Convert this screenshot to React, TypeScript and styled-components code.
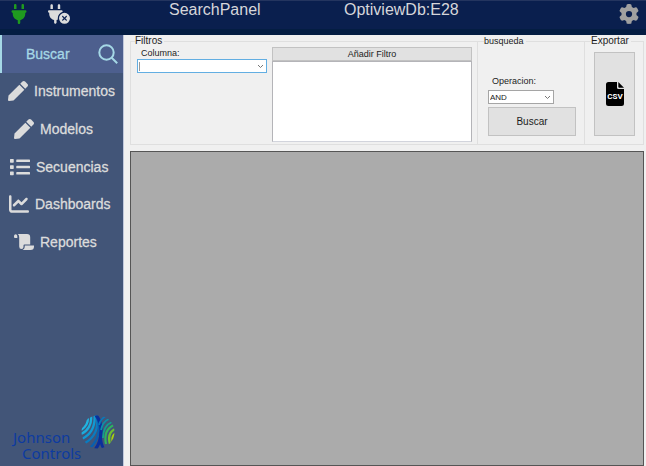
import React from "react";
import styled, { createGlobalStyle } from "styled-components";
import { FaPen, FaList } from "react-icons/fa";
import { FaPlug, FaPlugCircleXmark, FaChartLine, FaGear } from "react-icons/fa6";

const GlobalStyle = createGlobalStyle`
  * { box-sizing: border-box; }
  body { margin: 0; background: #f0f0f0; font-family: "Liberation Sans", Arial, sans-serif; }
  button, select { font-family: inherit; }
`;

const Page = styled.div`
  min-height: 100vh;
  display: grid;
  grid-template-rows: 35px 1fr;
`;

const Header = styled.header`
  display: grid;
  grid-template-columns: 38px 131px 175px 1fr auto;
  align-items: center;
  padding: 0 7px 2px 0;
  background: #0a1f4e;
  border-top: 1px solid #24355f;
  border-bottom: 6px solid #041d42;
  color: #d6d6da;
`;

const IconButton = styled.button<{ $color: string; $left: number }>`
  display: flex;
  padding: 0 0 0 ${(p) => p.$left}px;
  border: 0;
  background: none;
  color: ${(p) => p.$color};
`;

const Title = styled.span`
  font-size: 16px;
  line-height: 18px;
  padding-bottom: 8px;
`;

const Body = styled.div`
  display: grid;
  grid-template-columns: 124px 1fr;
`;

const Sidebar = styled.aside`
  display: flex;
  flex-direction: column;
  justify-content: space-between;
  background: #425578;
  border-right: 1px solid #c0c8dc;
`;

const Nav = styled.nav`
  display: grid;
  height: 226px;
  grid-template-rows: repeat(6, 1fr);
`;

const NavButton = styled.button<{ $inset: number; $active?: boolean }>`
  display: flex;
  align-items: center;
  gap: 6px;
  padding: 0 5px 0 ${(p) => p.$inset}px;
  border: 0;
  border-left: ${(p) => (p.$active ? "2px solid #a5d8e6" : "0")};
  background: ${(p) => (p.$active ? "#4d5f8e" : "transparent")};
  color: ${(p) => (p.$active ? "#a5d8e6" : "#dcdcdc")};
  justify-content: ${(p) => (p.$active ? "space-between" : "flex-start")};
  font-size: 14px;
  text-align: left;
  -webkit-text-stroke: thin;
  svg { flex: none; -webkit-text-stroke: 0; }
`;

const Logo = styled.div`
  display: flex;
  align-items: flex-start;
  padding: 0 8px 5px 13px;
  color: #0d3ba0;
  font-family: "Noto Sans", sans-serif;
  font-size: 15px;
  line-height: 16px;
`;

const LogoText = styled.div`
  padding-top: 14px;
  width: 68px;
  white-space: nowrap;
`;

const LogoSecond = styled.div`
  padding-left: 9px;
`;

const Main = styled.main`
  display: grid;
  grid-template-rows: 109px 1fr;
  gap: 7px;
  padding: 0 2px 0 6px;
`;

const Filters = styled.div`
  display: grid;
  grid-template-columns: 1fr 107px 59px;
`;

const Group = styled.fieldset`
  min-width: 0;
  margin: 0 0 0 -1px;
  padding: 0 5px 2px 6px;
  border: 1px solid #dfdfdf;
  color: #1c1c1c;
  &:first-child { margin-left: 0; padding-left: 4px; }
`;

const Legend = styled.legend<{ $size: number }>`
  padding: 0 2px 0 0;
  height: 12px;
  font-size: ${(p) => p.$size}px;
  line-height: 12px;
`;

const FilterColumns = styled.div`
  display: grid;
  grid-template-columns: 130px 1fr;
  gap: 5px;
  margin-left: 2px;
  height: 95px;
`;

const Field = styled.div`
  display: flex;
  flex-direction: column;
`;

const Label = styled.label`
  padding-left: 4px;
  font-size: 9px;
  line-height: 12px;
`;

const SelectBox = styled.div<{ $focus?: boolean; $width: string }>`
  position: relative;
  width: ${(p) => p.$width};
  height: 14px;
  border: 1px solid ${(p) => (p.$focus ? "#62aee2" : "#a5a5a5")};
  background: #fff;
  svg { position: absolute; right: 2px; top: 4px; pointer-events: none; }
`;

const Select = styled.select`
  display: block;
  appearance: none;
  width: 100%;
  height: 100%;
  padding: 0 12px 0 1px;
  border: 0;
  background: transparent;
  color: #222;
  font-size: 8px;
  outline: none;
`;

const Caret = styled.span`
  position: absolute;
  left: 1px;
  top: 2px;
  width: 1px;
  height: 9px;
  background: #999;
`;

const PlainButton = styled.button<{ $size: number }>`
  display: flex;
  align-items: center;
  justify-content: center;
  padding: 0;
  border: 1px solid #c2c2c2;
  background: #e1e1e1;
  color: #1c1c1c;
  font-size: ${(p) => p.$size}px;
`;

const FilterList = styled.div`
  display: grid;
  grid-template-rows: 14px 1fr;
`;

const ListBox = styled.div`
  background: #fff;
  border: 1px solid #b4b4b8;
  border-bottom-color: #d2d4dc;
`;

const SearchFields = styled.div`
  display: grid;
  grid-template-rows: 12px 14px 29px;
  row-gap: 3px;
  padding: 28px 3px 0 4px;
`;

const ExportArea = styled.div`
  display: grid;
  grid-template-rows: 84px;
  padding: 5px 3px 0;
`;

const Results = styled.section`
  background: #ababab;
  border: 1px solid #555;
`;

const Chevron = () => (
  <svg width="7" height="5" viewBox="0 0 7 5" fill="none" stroke="#777" aria-hidden="true">
    <path d="M1 1l2.5 2.5L6 1" />
  </svg>
);

const SearchIcon = () => (
  <svg width="20" height="20" viewBox="0 0 20 20" fill="none" stroke="currentColor" strokeWidth="2" aria-hidden="true">
    <circle cx="8.5" cy="8.5" r="7.2" />
    <path d="M13.7 13.7l5.5 5.5" />
  </svg>
);

const ScrollIcon = () => (
  <svg width="20" height="20" viewBox="0 0 20 20" fill="currentColor" aria-hidden="true">
    <path d="M0 4.500C0 1.400 3.300 1.400 3.300 4.500V6H1Q0 6 0 5Z" />
    <path d="M3.800 2H13Q16.200 2 16.200 5.200V12.500H10.500Q9.500 12.500 9.500 13.500V15Q9.500 17 7.500 17Q5.200 17 5.200 14.500V5Q5.200 3.200 3.800 2Z" />
    <path d="M10.700 13.500H20V14.500Q20 18 16.500 18H8.500Q10.700 17.200 10.700 15Z" />
  </svg>
);

const CsvIcon = () => (
  <svg width="18" height="24" viewBox="0 0 18 24" aria-hidden="true">
    <path d="M2.500 0H11V5.500Q11 7 12.500 7H18V21.500Q18 24 15.500 24H2.500Q0 24 0 21.500V2.500Q0 0 2.500 0Z" fill="#000" />
    <path d="M12.300 0L18 5.700H13.300Q12.300 5.700 12.300 4.700Z" fill="#000" />
    <text x="9" y="17" textAnchor="middle" fill="#fff" fontFamily="Roboto, sans-serif" fontWeight="700" fontSize="8">CSV</text>
  </svg>
);

const Globe = () => (
  <svg width="34" height="34" viewBox="0 0 34 34" fill="none" aria-hidden="true">
    <clipPath id="globe"><circle cx="17" cy="17" r="16.5" /></clipPath>
    <g clipPath="url(#globe)">
      <g strokeWidth="2.3">
        <path d="M7 3C7 9 5 12 0 15" stroke="#20b4e0" />
        <path d="M10 1C11 9 7 16 0 19" stroke="#1cacdc" />
        <path d="M13.500 0C14.500 12 9 20 1 24" stroke="#109ad4" />
        <path d="M15 -1C19 13 13 23 4 28" stroke="#0a7cc0" />
      </g>
      <path d="M15 0C21 13 17 26 9 33" stroke="#0860b0" strokeWidth="2.2" />
      <path d="M15 0C22 9 22 24 14 35" stroke="#0a2f9c" strokeWidth="3.200" />
      <path d="M20 17C19 25 20 30 23 34" stroke="#0a2f9c" strokeWidth="2.800" />
      <g strokeWidth="1.800">
        <path d="M25 1C21 3 19 6 18 10" stroke="#0a78ba" />
        <path d="M28 4C23 6 21 10 20 15" stroke="#0e90a8" />
        <path d="M31 7C26 9 22 14 22 23" stroke="#12a090" />
      </g>
      <path d="M33 10C26 13 23 19 25 29" stroke="#30b060" strokeWidth="2.2" />
      <path d="M34 14C28 17 27 22 29 29" stroke="#6cc030" strokeWidth="2.400" />
      <path d="M36 18C32 20 31 23 32 27" stroke="#a8d010" strokeWidth="2.800" />
    </g>
  </svg>
);

const navItems = [
  { label: "Instrumentos", inset: 8, icon: <FaPen size={20} /> },
  { label: "Modelos", inset: 14, icon: <FaPen size={20} /> },
  { label: "Secuencias", inset: 10, icon: <FaList size={20} /> },
  { label: "Dashboards", inset: 9, icon: <FaChartLine size={20} /> },
  { label: "Reportes", inset: 14, icon: <ScrollIcon /> },
];

export default function App() {
  return (
    <Page>
      <GlobalStyle />
      <Header>
        <IconButton $color="#1f9a1f" $left={9} aria-label="Conectar">
          <FaPlug size={20} />
        </IconButton>
        <IconButton $color="#dcdcdc" $left={10} aria-label="Desconectar">
          <FaPlugCircleXmark size={22} />
        </IconButton>
        <Title>SearchPanel</Title>
        <Title>OptiviewDb:E28</Title>
        <IconButton $color="#a0a0a0" $left={0} aria-label="Ajustes">
          <FaGear size={20} />
        </IconButton>
      </Header>
      <Body>
        <Sidebar>
          <Nav>
            <NavButton $active $inset={24}>
              Buscar
              <SearchIcon />
            </NavButton>
            {navItems.map((item) => (
              <NavButton key={item.label} $inset={item.inset}>
                {item.icon}
                {item.label}
              </NavButton>
            ))}
          </Nav>
          <Logo>
            <LogoText>
              <div>Johnson</div>
              <LogoSecond>Controls</LogoSecond>
            </LogoText>
            <Globe />
          </Logo>
        </Sidebar>
        <Main>
          <Filters>
            <Group>
              <Legend $size={10}>Filtros</Legend>
              <FilterColumns>
                <Field>
                  <Label htmlFor="columna">Columna:</Label>
                  <SelectBox $focus $width="100%">
                    <Select id="columna" defaultValue="">
                      <option value=""></option>
                    </Select>
                    <Caret />
                    <Chevron />
                  </SelectBox>
                </Field>
                <FilterList>
                  <PlainButton $size={9}>Añadir Filtro</PlainButton>
                  <ListBox />
                </FilterList>
              </FilterColumns>
            </Group>
            <Group>
              <Legend $size={9}>busqueda</Legend>
              <SearchFields>
                <Label htmlFor="operacion">Operacion:</Label>
                <SelectBox $width="66px">
                  <Select id="operacion" defaultValue="AND">
                    <option>AND</option>
                    <option>OR</option>
                  </Select>
                  <Chevron />
                </SelectBox>
                <PlainButton $size={10}>Buscar</PlainButton>
              </SearchFields>
            </Group>
            <Group>
              <Legend $size={10}>Exportar</Legend>
              <ExportArea>
                <PlainButton $size={10} aria-label="Exportar CSV">
                  <CsvIcon />
                </PlainButton>
              </ExportArea>
            </Group>
          </Filters>
          <Results aria-label="Resultados" />
        </Main>
      </Body>
    </Page>
  );
}
